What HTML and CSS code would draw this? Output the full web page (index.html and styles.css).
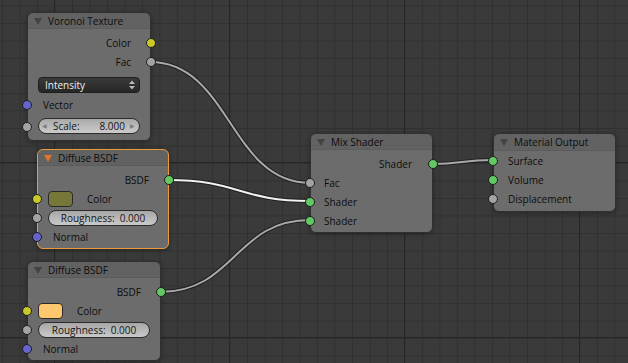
FILE: index.html
```html
<!DOCTYPE html>
<html>
<head>
<meta charset="utf-8">
<link rel="stylesheet" href="styles.css">
</head>
<body>
<div class="editor">
  <svg class="links" width="628" height="363" viewBox="0 0 628 363">
    <g class="outline">
      <path d="M150,62 C230,62 230,183 310,183"/>
      <path d="M168,180 C239,180 239,201 310,201"/>
      <path d="M160,292 C235,292 235,220 310,220"/>
      <path d="M432,164 C462,164 462,160 492,160"/>
    </g>
    <g class="core">
      <path d="M150,62 C230,62 230,183 310,183"/>
      <path class="hi" d="M168,180 C239,180 239,201 310,201"/>
      <path d="M160,292 C235,292 235,220 310,220"/>
      <path d="M432,164 C462,164 462,160 492,160"/>
    </g>
  </svg>

  <div class="node voronoi">
    <div class="head"><span class="tri"></span>Voronoi Texture</div>
    <div class="body">
      <div class="row out">Color<span class="sock r yellow"></span></div>
      <div class="row out">Fac<span class="sock r grey"></span></div>
      <div class="wrow drop-row">
        <div class="dropdown">Intensity
          <svg class="updown" width="6" height="10" viewBox="0 0 6 10"><path d="M0,4 L3,0.5 L6,4 Z M0,6 L3,9.5 L6,6 Z" fill="#b8b8b8"/></svg>
        </div>
      </div>
      <div class="row in"><span class="sock l blue"></span>Vector</div>
      <div class="wrow scale-row"><span class="sock l grey"></span>
        <div class="numfield">
          <span class="arr">&#9664;</span><span class="nlabel">Scale:</span><span class="nval">8.000</span><span class="arr">&#9654;</span>
        </div>
      </div>
    </div>
  </div>

  <div class="node diffuse1 selected">
    <div class="head"><span class="tri"></span>Diffuse BSDF</div>
    <div class="body">
      <div class="row out">BSDF<span class="sock r green"></span></div>
      <div class="wrow color-row"><span class="sock l yellow"></span><span class="swatch olive"></span><span class="clabel">Color</span></div>
      <div class="wrow slide-row"><span class="sock l grey"></span><div class="slider">Roughness:&nbsp; 0.000</div></div>
      <div class="row in"><span class="sock l blue"></span>Normal</div>
    </div>
  </div>

  <div class="node diffuse2">
    <div class="head"><span class="tri"></span>Diffuse BSDF</div>
    <div class="body">
      <div class="row out">BSDF<span class="sock r green"></span></div>
      <div class="wrow color-row"><span class="sock l yellow"></span><span class="swatch peach"></span><span class="clabel">Color</span></div>
      <div class="wrow slide-row"><span class="sock l grey"></span><div class="slider">Roughness:&nbsp; 0.000</div></div>
      <div class="row in"><span class="sock l blue"></span>Normal</div>
    </div>
  </div>

  <div class="node mix">
    <div class="head"><span class="tri"></span>Mix Shader</div>
    <div class="body">
      <div class="row out">Shader<span class="sock r green"></span></div>
      <div class="row in"><span class="sock l grey"></span>Fac</div>
      <div class="row in"><span class="sock l green"></span>Shader</div>
      <div class="row in"><span class="sock l green"></span>Shader</div>
    </div>
  </div>

  <div class="node output">
    <div class="head"><span class="tri"></span>Material Output</div>
    <div class="body">
      <div class="row in"><span class="sock l green"></span>Surface</div>
      <div class="row in"><span class="sock l green"></span>Volume</div>
      <div class="row in"><span class="sock l grey"></span>Displacement</div>
    </div>
  </div>
</div>
</body>
</html>
```

FILE: styles.css
```css
* { box-sizing: border-box; }
html, body { margin: 0; padding: 0; }
body { background: #393939; overflow: hidden; }

.editor {
  position: relative;
  width: 628px;
  height: 363px;
  overflow: hidden;
  background-color: #3a3a3a;
  background-image:
    linear-gradient(to right, #272727 1px, transparent 1px),
    linear-gradient(to bottom, #272727 1px, transparent 1px),
    linear-gradient(to right, #313131 1px, transparent 1px),
    linear-gradient(to bottom, #313131 1px, transparent 1px);
  background-size: 175px 175px, 175px 175px, 17.5px 17.5px, 17.5px 17.5px;
  background-position: 54px 0, 0 162px, 2px 0, 0 5.5px;
  font-family: "Open Sans", "DejaVu Sans", sans-serif;
  font-size: 10px;
}

.links { position: absolute; left: 0; top: 0; }
.links path { fill: none; }
.links .outline path { stroke: #1c1c1c; stroke-width: 4; stroke-opacity: 0.85; }
.links .core path { stroke: #a9a9a9; stroke-width: 2; }
.links .core path.hi { stroke: #f2f2f2; }

.node {
  position: absolute;
  background: rgba(112, 112, 112, 0.93);
  border: 1px solid #303030;
  border-radius: 6px;
  color: #0c0c0c;
  box-shadow: 0 1px 5px rgba(0, 0, 0, 0.35);
}
.node.selected { border-color: #eb9b3c; }

.head {
  height: 16px;
  display: flex;
  align-items: center;
  padding-left: 6px;
  gap: 6px;
  background: rgba(0, 0, 0, 0.09);
  border-radius: 5px 5px 0 0;
  border-bottom: 1px solid rgba(0, 0, 0, 0.06);
  white-space: nowrap;
}
.tri {
  width: 0; height: 0;
  border-left: 4px solid transparent;
  border-right: 4px solid transparent;
  border-top: 7px solid #434343;
  margin-top: 1px;
}
.selected .tri { border-top-color: #e3742a; }

.body { padding-top: 4px; }

.row {
  position: relative;
  height: 19px;
  display: flex;
  align-items: center;
  white-space: nowrap;
}
.row.out { justify-content: flex-end; padding-right: 19px; }
.row.in { padding-left: 15px; }

.wrow { position: relative; display: flex; align-items: center; }

.sock {
  position: absolute;
  top: 50%;
  width: 10px;
  height: 10px;
  margin-top: -5px;
  border-radius: 50%;
  border: 1px solid #1d1d1d;
}
.sock.l { left: -6px; }
.sock.r { right: -6px; }
.yellow { background: #c8c829; }
.grey { background: #a3a3a3; }
.blue { background: #6464cc; }
.green { background: #62c862; }

/* Voronoi */
.voronoi { left: 27px; top: 12px; width: 124px; }
.drop-row { height: 24px; padding: 6px 10px 2px; }
.dropdown {
  flex: 1;
  height: 16px;
  display: flex;
  align-items: center;
  justify-content: space-between;
  padding: 0 4px 0 6px;
  color: #f0f0f0;
  background: linear-gradient(#3a3a3a, #262626);
  border: 1px solid #1e1e1e;
  border-radius: 4px;
}
.updown { display: block; }
.scale-row { height: 26px; padding: 4px 10px 6px; }
.numfield {
  flex: 1;
  height: 16px;
  display: flex;
  align-items: center;
  padding: 0 3px;
  background: linear-gradient(#a9a9a9, #cbcbcb);
  border: 1px solid #2c2c2c;
  border-radius: 8px;
  color: #151515;
}
.arr { font-size: 6px; color: #7c7c7c; width: 6px; }
.nlabel { margin-left: 5px; }
.nval { margin-left: auto; margin-right: 5px; }

/* Diffuse */
.diffuse1 { left: 37px; top: 149px; width: 132px; }
.diffuse2 { left: 27px; top: 261px; width: 134px; }
.color-row { height: 19px; padding-left: 10px; }
.swatch {
  width: 25px;
  height: 16px;
  border: 1px solid #2a2a2a;
  border-radius: 4px;
}
.olive { background: #77773a; }
.peach { background: #ffc86f; }
.clabel { margin-left: 14px; }
.slide-row { height: 19px; padding: 0 10px 0 10px; }
.slider {
  flex: 1;
  height: 16px;
  display: flex;
  align-items: center;
  justify-content: center;
  background: linear-gradient(#a7a7a7, #c9c9c9);
  border: 1px solid #2c2c2c;
  border-radius: 8px;
  color: #151515;
  white-space: nowrap;
}
.diffuse1 .body, .diffuse2 .body, .mix .body { padding-bottom: 2px; }

/* Mix */
.mix { left: 310px; top: 133px; width: 123px; }
.mix .row.out { padding-right: 20px; }
.mix .row.in { padding-left: 13px; }

/* Output */
.output { left: 493px; top: 133px; width: 123px; }
.output .head { height: 17px; }
.output .body { padding-top: 0; padding-bottom: 3px; }
.output .row.in { padding-left: 14px; }
```
